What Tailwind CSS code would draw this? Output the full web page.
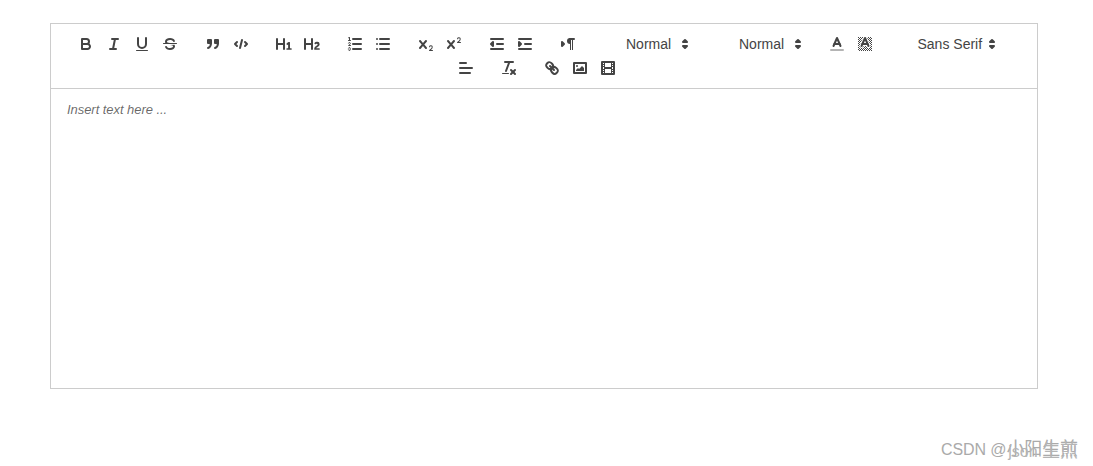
<!DOCTYPE html>
<html lang="en">
<head>
  <meta charset="UTF-8">
  <meta name="viewport" content="width=device-width, initial-scale=1.0">
  <title>Editor</title>
  <script src="https://cdn.jsdelivr.net/npm/@tailwindcss/browser@4"></script>
</head>
<body class="bg-white font-['Liberation_Sans',Arial,sans-serif] text-[#444]">
  <div class="relative h-[466px] w-[1093px] overflow-hidden pl-[50px] pt-[23px]">
    <div class="w-[988px] border border-[#ccc]">
      <!-- toolbar -->
      <div class="flex flex-wrap justify-center border-b border-[#ccc] p-2">
        <div class="mr-[15px] flex">
          <button class="h-6 w-7 px-[5px] py-[3px]" aria-label="Bold">
            <svg viewBox="0 0 18 18" class="size-[18px] fill-none stroke-[#444] stroke-2 [stroke-linecap:round] [stroke-linejoin:round]"><path d="M5,4H9.5A2.5,2.5,0,0,1,12,6.5v0A2.5,2.5,0,0,1,9.5,9H5V4Z"/><path d="M5,9h5.5A2.5,2.5,0,0,1,13,11.5v0A2.5,2.5,0,0,1,10.5,14H5V9Z"/></svg>
          </button>
          <button class="h-6 w-7 px-[5px] py-[3px]" aria-label="Italic">
            <svg viewBox="0 0 18 18" class="size-[18px] fill-none stroke-[#444] stroke-2 [stroke-linecap:round] [stroke-linejoin:round]"><line x1="7" x2="13" y1="4" y2="4"/><line x1="5" x2="11" y1="14" y2="14"/><line x1="8" x2="10" y1="14" y2="4"/></svg>
          </button>
          <button class="h-6 w-7 px-[5px] py-[3px]" aria-label="Underline">
            <svg viewBox="0 0 18 18" class="size-[18px] fill-none stroke-[#444] stroke-2 [stroke-linecap:round] [stroke-linejoin:round]"><path d="M5,3V9a4.012,4.012,0,0,0,4,4H9a4.012,4.012,0,0,0,4-4V3"/><rect class="fill-[#444] stroke-none" height="1" rx="0.5" ry="0.5" width="12" x="3" y="15"/></svg>
          </button>
          <button class="h-6 w-7 px-[5px] py-[3px]" aria-label="Strike">
            <svg viewBox="0 0 18 18" class="size-[18px] fill-none stroke-[#444] stroke-2 [stroke-linecap:round] [stroke-linejoin:round]"><line class="stroke-1" x1="15.5" x2="2.5" y1="8.5" y2="8.5"/><path class="fill-[#444] stroke-none" d="M9.007,8C6.542,7.791,6,7.519,6,6.5,6,5.792,7.283,5,9,5c1.571,0,2.765.679,2.969,1.309a1,1,0,0,0,1.9-.617C13.356,4.106,11.354,3,9,3,6.2,3,4,4.538,4,6.5a3.2,3.2,0,0,0,.5,1.843Z"/><path class="fill-[#444] stroke-none" d="M8.984,10C11.457,10.208,12,10.479,12,11.5c0,.708-1.283,1.5-3,1.5-1.571,0-2.765-.679-2.969-1.309a1,1,0,1,0-1.9.617C4.644,13.894,6.646,15,9,15c2.8,0,5-1.538,5-3.5a3.2,3.2,0,0,0-.5-1.843Z"/></svg>
          </button>
        </div>
        <div class="mr-[15px] flex">
          <button class="h-6 w-7 px-[5px] py-[3px]" aria-label="Blockquote">
            <svg viewBox="0 0 18 18" class="size-[18px] fill-none stroke-[#444] stroke-2 [stroke-linecap:round] [stroke-linejoin:round]"><rect class="fill-[#444]" height="3" width="3" x="4" y="5"/><rect class="fill-[#444]" height="3" width="3" x="11" y="5"/><path d="M7,8c0,4.031-3,5-3,5"/><path d="M14,8c0,4.031-3,5-3,5"/></svg>
          </button>
          <button class="h-6 w-7 px-[5px] py-[3px]" aria-label="Code">
            <svg viewBox="0 0 18 18" class="size-[18px] fill-none stroke-[#444] stroke-2 [stroke-linecap:round] [stroke-linejoin:round]"><polyline points="5 7 3 9 5 11"/><polyline points="13 7 15 9 13 11"/><line x1="10" x2="8" y1="5" y2="13"/></svg>
          </button>
        </div>
        <div class="mr-[15px] flex">
          <button class="h-6 w-7 px-[5px] py-[3px]" aria-label="Heading 1">
            <svg viewBox="0 0 18 18" class="size-[18px] fill-[#444]"><path d="M10,4V14a1,1,0,0,1-2,0V10H3v4a1,1,0,0,1-2,0V4A1,1,0,0,1,3,4V8H8V4a1,1,0,0,1,2,0Zm6.06787,9.209H14.98975V7.59863a.54085.54085,0,0,0-.605-.60547h-.62744a1.01119,1.01119,0,0,0-.748.29688L11.645,8.56641a.5435.5435,0,0,0-.022.8584l.28613.30762a.53861.53861,0,0,0,.84717.0332l.09912-.08789a1.2137,1.2137,0,0,0,.2417-.35254h.02246s-.01123.30859-.01123.60547V13.209H12.041a.54085.54085,0,0,0-.605.60547v.43945a.54085.54085,0,0,0,.605.60547h4.02686a.54085.54085,0,0,0,.605-.60547v-.43945A.54085.54085,0,0,0,16.06787,13.209Z"/></svg>
          </button>
          <button class="h-6 w-7 px-[5px] py-[3px]" aria-label="Heading 2">
            <svg viewBox="0 0 18 18" class="size-[18px] fill-[#444]"><path d="M16.73975,13.81445v.43945a.54085.54085,0,0,1-.605.60547H11.855a.58392.58392,0,0,1-.64893-.60547V14.0127c0-2.90527,3.39941-3.42187,3.39941-4.55469a.77675.77675,0,0,0-.84717-.78125,1.17684,1.17684,0,0,0-.83594.38477c-.2749.26367-.561.374-.85791.13184l-.4292-.34082c-.30811-.24219-.38525-.51758-.1543-.81445a2.97155,2.97155,0,0,1,2.45361-1.17676,2.45393,2.45393,0,0,1,2.68408,2.40918c0,2.45312-3.1792,2.92676-3.27832,3.93848h2.79443A.54085.54085,0,0,1,16.73975,13.81445ZM9,3A.99974.99974,0,0,0,8,4V8H3V4A1,1,0,0,0,1,4V14a1,1,0,0,0,2,0V10H8v4a1,1,0,0,0,2,0V4A.99974.99974,0,0,0,9,3Z"/></svg>
          </button>
        </div>
        <div class="mr-[15px] flex">
          <button class="h-6 w-7 px-[5px] py-[3px]" aria-label="Ordered list">
            <svg viewBox="0 0 18 18" class="size-[18px] fill-none stroke-[#444] stroke-2 [stroke-linecap:round] [stroke-linejoin:round]"><line x1="7" x2="15" y1="4" y2="4"/><line x1="7" x2="15" y1="9" y2="9"/><line x1="7" x2="15" y1="14" y2="14"/><line class="stroke-1" x1="2.5" x2="4.5" y1="5.5" y2="5.5"/><path class="fill-[#444] stroke-none" d="M3.5,6A0.5,0.5,0,0,1,3,5.5V3.085l-0.276.138A0.5,0.5,0,0,1,2.053,3c-0.124-.247-0.023-0.324.224-0.447l1-.5A0.5,0.5,0,0,1,4,2.5v3A0.5,0.5,0,0,1,3.5,6Z"/><path class="stroke-1" d="M4.5,10.5h-2c0-.234,1.85-1.076,1.85-2.234A0.959,0.959,0,0,0,2.5,8.156"/><path class="stroke-1" d="M2.5,14.846a0.959,0.959,0,0,0,1.85-.109A0.7,0.7,0,0,0,3.75,14a0.688,0.688,0,0,0,.6-0.736,0.959,0.959,0,0,0-1.85-.109"/></svg>
          </button>
          <button class="h-6 w-7 px-[5px] py-[3px]" aria-label="Bullet list">
            <svg viewBox="0 0 18 18" class="size-[18px] fill-none stroke-[#444] stroke-2 [stroke-linecap:round] [stroke-linejoin:round]"><line x1="6" x2="15" y1="4" y2="4"/><line x1="6" x2="15" y1="9" y2="9"/><line x1="6" x2="15" y1="14" y2="14"/><line x1="3" x2="3" y1="4" y2="4"/><line x1="3" x2="3" y1="9" y2="9"/><line x1="3" x2="3" y1="14" y2="14"/></svg>
          </button>
        </div>
        <div class="mr-[15px] flex">
          <button class="h-6 w-7 px-[5px] py-[3px]" aria-label="Subscript">
            <svg viewBox="0 0 18 18" class="size-[18px] fill-[#444]"><path d="M15.5,15H13.861a3.858,3.858,0,0,0,1.914-2.975,1.8,1.8,0,0,0-1.6-1.751A1.921,1.921,0,0,0,12.021,11.7a0.50013,0.50013,0,1,0,.957.291h0a0.914,0.914,0,0,1,1.053-.725,0.81,0.81,0,0,1,.744.762c0,1.076-1.16971,1.86982-1.93971,2.43082A1.45639,1.45639,0,0,0,12,15.5a0.5,0.5,0,0,0,.5.5h3A0.5,0.5,0,0,0,15.5,15Z"/><path d="M9.65,5.241a1,1,0,0,0-1.409.108L6,7.964,3.759,5.349A1,1,0,0,0,2.192,6.59178Q2.21541,6.6213,2.241,6.649L4.684,9.5,2.241,12.35A1,1,0,0,0,3.71,13.70722q0.02557-.02768.049-0.05722L6,11.036,8.241,13.65a1,1,0,1,0,1.567-1.24277Q9.78459,12.3777,9.759,12.35L7.316,9.5,9.759,6.651A1,1,0,0,0,9.65,5.241Z"/></svg>
          </button>
          <button class="h-6 w-7 px-[5px] py-[3px]" aria-label="Superscript">
            <svg viewBox="0 0 18 18" class="size-[18px] fill-[#444]"><path d="M15.5,7H13.861a4.015,4.015,0,0,0,1.914-2.975,1.8,1.8,0,0,0-1.6-1.751A1.922,1.922,0,0,0,12.021,3.7a0.5,0.5,0,1,0,.957.291,0.917,0.917,0,0,1,1.053-.725,0.81,0.81,0,0,1,.744.762c0,1.077-1.164,1.925-1.934,2.486A1.423,1.423,0,0,0,12,7.5a0.5,0.5,0,0,0,.5.5h3A0.5,0.5,0,0,0,15.5,7Z"/><path d="M9.651,5.241a1,1,0,0,0-1.41.108L6,7.964,3.759,5.349a1,1,0,1,0-1.519,1.3L4.683,9.5,2.241,12.35a1,1,0,1,0,1.519,1.3L6,11.036l2.241,2.615a1,1,0,0,0,1.519-1.3L7.317,9.5,9.759,6.651A1,1,0,0,0,9.651,5.241Z"/></svg>
          </button>
        </div>
        <div class="mr-[15px] flex">
          <button class="h-6 w-7 px-[5px] py-[3px]" aria-label="Outdent">
            <svg viewBox="0 0 18 18" class="size-[18px] fill-none stroke-[#444] stroke-2 [stroke-linecap:round] [stroke-linejoin:round]"><line x1="3" x2="15" y1="14" y2="14"/><line x1="3" x2="15" y1="4" y2="4"/><line x1="9" x2="15" y1="9" y2="9"/><polyline class="fill-[#444]" points="5 7 5 11 3 9 5 7"/></svg>
          </button>
          <button class="h-6 w-7 px-[5px] py-[3px]" aria-label="Indent">
            <svg viewBox="0 0 18 18" class="size-[18px] fill-none stroke-[#444] stroke-2 [stroke-linecap:round] [stroke-linejoin:round]"><line x1="3" x2="15" y1="14" y2="14"/><line x1="3" x2="15" y1="4" y2="4"/><line x1="9" x2="15" y1="9" y2="9"/><polyline class="fill-[#444]" points="3 7 3 11 5 9 3 7"/></svg>
          </button>
        </div>
        <div class="mr-[15px] flex">
          <button class="h-6 w-7 px-[5px] py-[3px]" aria-label="Direction">
            <svg viewBox="0 0 18 18" class="size-[18px] fill-none stroke-[#444] stroke-2 [stroke-linecap:round] [stroke-linejoin:round]"><polygon class="fill-[#444]" points="3 11 5 9 3 7 3 11"/><line x1="15" x2="11" y1="4" y2="4"/><path class="fill-[#444] stroke-none" d="M11,3a3,3,0,0,0,0,6h1V3H11Z"/><rect class="fill-[#444] stroke-none" height="11" width="1" x="11" y="4"/><rect class="fill-[#444] stroke-none" height="11" width="1" x="13" y="4"/></svg>
          </button>
        </div>
        <div class="mr-[15px] flex h-6 w-[98px] items-center justify-between pr-px pl-[29.5px] text-sm whitespace-nowrap">
          <span>Normal</span>
          <svg viewBox="0 0 18 18" class="size-[18px] shrink-0 fill-[#444] stroke-[#444] stroke-2 [stroke-linejoin:round]"><polygon points="7 11 9 13 11 11 7 11"/><polygon points="7 7 9 5 11 7 7 7"/></svg>
        </div>
        <div class="mr-[15px] flex h-6 w-[98px] items-center justify-between pr-px pl-[29.5px] text-sm whitespace-nowrap">
          <span>Normal</span>
          <svg viewBox="0 0 18 18" class="size-[18px] shrink-0 fill-[#444] stroke-[#444] stroke-2 [stroke-linejoin:round]"><polygon points="7 11 9 13 11 11 7 11"/><polygon points="7 7 9 5 11 7 7 7"/></svg>
        </div>
        <div class="mr-[15px] flex">
          <button class="h-6 w-7 px-[5px] py-[3px]" aria-label="Color">
            <svg viewBox="0 0 18 18" class="size-[18px] fill-none stroke-[#444] stroke-2 [stroke-linecap:round] [stroke-linejoin:round]"><line class="opacity-40" x1="3" x2="15" y1="15" y2="15"/><polyline points="5.5 11 9 3 12.5 11"/><line x1="11.63" x2="6.38" y1="9" y2="9"/></svg>
          </button>
          <button class="h-6 w-7 px-[5px] py-[3px]" aria-label="Background">
            <svg viewBox="0 0 18 18" class="size-[18px] fill-none stroke-[#444] stroke-2 [stroke-linecap:round] [stroke-linejoin:round]">
              <defs><pattern id="dither" width="2" height="2" patternUnits="userSpaceOnUse"><rect class="fill-[#444] stroke-none" width="1" height="1"/><rect class="fill-[#444] stroke-none" x="1" y="1" width="1" height="1"/></pattern></defs>
              <rect class="stroke-none" x="2" y="2" width="14" height="14" fill="url(#dither)"/>
              <polyline class="stroke-white stroke-[4]" points="5.5 11 9 3 12.5 11"/><line class="stroke-white stroke-[4]" x1="11.63" x2="6.38" y1="9" y2="9"/>
              <polyline points="5.5 11 9 3 12.5 11"/><line x1="11.63" x2="6.38" y1="9" y2="9"/>
            </svg>
          </button>
        </div>
        <div class="mr-[15px] flex h-6 w-[108px] items-center justify-between pr-px pl-6 text-sm whitespace-nowrap">
          <span>Sans Serif</span>
          <svg viewBox="0 0 18 18" class="size-[18px] shrink-0 fill-[#444] stroke-[#444] stroke-2 [stroke-linejoin:round]"><polygon points="7 11 9 13 11 11 7 11"/><polygon points="7 7 9 5 11 7 7 7"/></svg>
        </div>
        <div class="mr-[15px] flex">
          <button class="h-6 w-7 px-[5px] py-[3px]" aria-label="Align">
            <svg viewBox="0 0 18 18" class="size-[18px] fill-none stroke-[#444] stroke-2 [stroke-linecap:round] [stroke-linejoin:round]"><line x1="3" x2="15" y1="9" y2="9"/><line x1="3" x2="13" y1="14" y2="14"/><line x1="3" x2="9" y1="4" y2="4"/></svg>
          </button>
        </div>
        <div class="mr-[15px] flex">
          <button class="h-6 w-7 px-[5px] py-[3px]" aria-label="Clean">
            <svg viewBox="0 0 18 18" class="size-[18px] fill-none stroke-[#444] stroke-2 [stroke-linecap:round] [stroke-linejoin:round]"><line x1="5" x2="13" y1="3" y2="3"/><line x1="6" x2="9.35" y1="12" y2="3"/><line x1="11" x2="15" y1="11" y2="15"/><line x1="15" x2="11" y1="11" y2="15"/><rect class="fill-[#444] stroke-none" height="1" rx="0.5" ry="0.5" width="7" x="2" y="14"/></svg>
          </button>
        </div>
        <div class="mr-[15px] flex">
          <button class="h-6 w-7 px-[5px] py-[3px]" aria-label="Link">
            <svg viewBox="0 0 18 18" class="size-[18px] fill-none stroke-[#444] stroke-2 [stroke-linecap:round] [stroke-linejoin:round]"><line x1="7" x2="11" y1="7" y2="11"/><path d="M8.9,4.577a3.476,3.476,0,0,1,.36,4.679A3.476,3.476,0,0,1,4.577,8.9C3.185,7.5,2.035,6.4,4.217,4.217S7.5,3.185,8.9,4.577Z"/><path d="M13.423,9.1a3.476,3.476,0,0,0-4.679-.36,3.476,3.476,0,0,0,.36,4.679c1.392,1.392,2.5,2.542,4.679.36S14.815,10.5,13.423,9.1Z"/></svg>
          </button>
          <button class="h-6 w-7 px-[5px] py-[3px]" aria-label="Image">
            <svg viewBox="0 0 18 18" class="size-[18px] fill-none stroke-[#444] stroke-2 [stroke-linecap:round] [stroke-linejoin:round]"><rect height="10" width="12" x="3" y="4"/><circle class="fill-[#444] stroke-none" cx="6" cy="7" r="1"/><polyline class="fill-[#444] stroke-none" points="5 12 5 11 7 9 8 10 11 7 13 9 13 12 5 12"/></svg>
          </button>
          <button class="h-6 w-7 px-[5px] py-[3px]" aria-label="Video">
            <svg viewBox="0 0 18 18" class="size-[18px] fill-none stroke-[#444] stroke-2 [stroke-linecap:round] [stroke-linejoin:round]"><rect height="12" width="12" x="3" y="3"/><g class="fill-[#444] stroke-none"><rect height="12" width="1" x="5" y="3"/><rect height="12" width="1" x="12" y="3"/><rect height="2" width="8" x="5" y="8"/><rect height="1" width="3" x="3" y="5"/><rect height="1" width="3" x="3" y="7"/><rect height="1" width="3" x="3" y="10"/><rect height="1" width="3" x="3" y="12"/><rect height="1" width="3" x="12" y="5"/><rect height="1" width="3" x="12" y="7"/><rect height="1" width="3" x="12" y="10"/><rect height="1" width="3" x="12" y="12"/></g></svg>
          </button>
        </div>
      </div>
      <!-- editor -->
      <div class="h-[299px] pt-3 pr-[15px] pl-4 text-[13px] leading-[1.42] tracking-[-0.05px] text-black/60 italic">Insert text here ...</div>
    </div>
    <!-- csdn watermark, two stamps on top of each other -->
    <div class="absolute top-[436px] right-[15px] font-['Liberation_Sans','Noto_Sans_CJK_SC',sans-serif] text-base tracking-[-0.1px] whitespace-nowrap text-[#aaa]">CSDN @<span class="text-[18px]">小阳生煎</span></div>
    <div class="absolute top-[438px] right-[15px] font-['Liberation_Sans','Noto_Sans_CJK_SC',sans-serif] text-base whitespace-nowrap text-[#b4b4b4]">json <span class="text-[18px]">生煎</span></div>
  </div>
</body>
</html>
